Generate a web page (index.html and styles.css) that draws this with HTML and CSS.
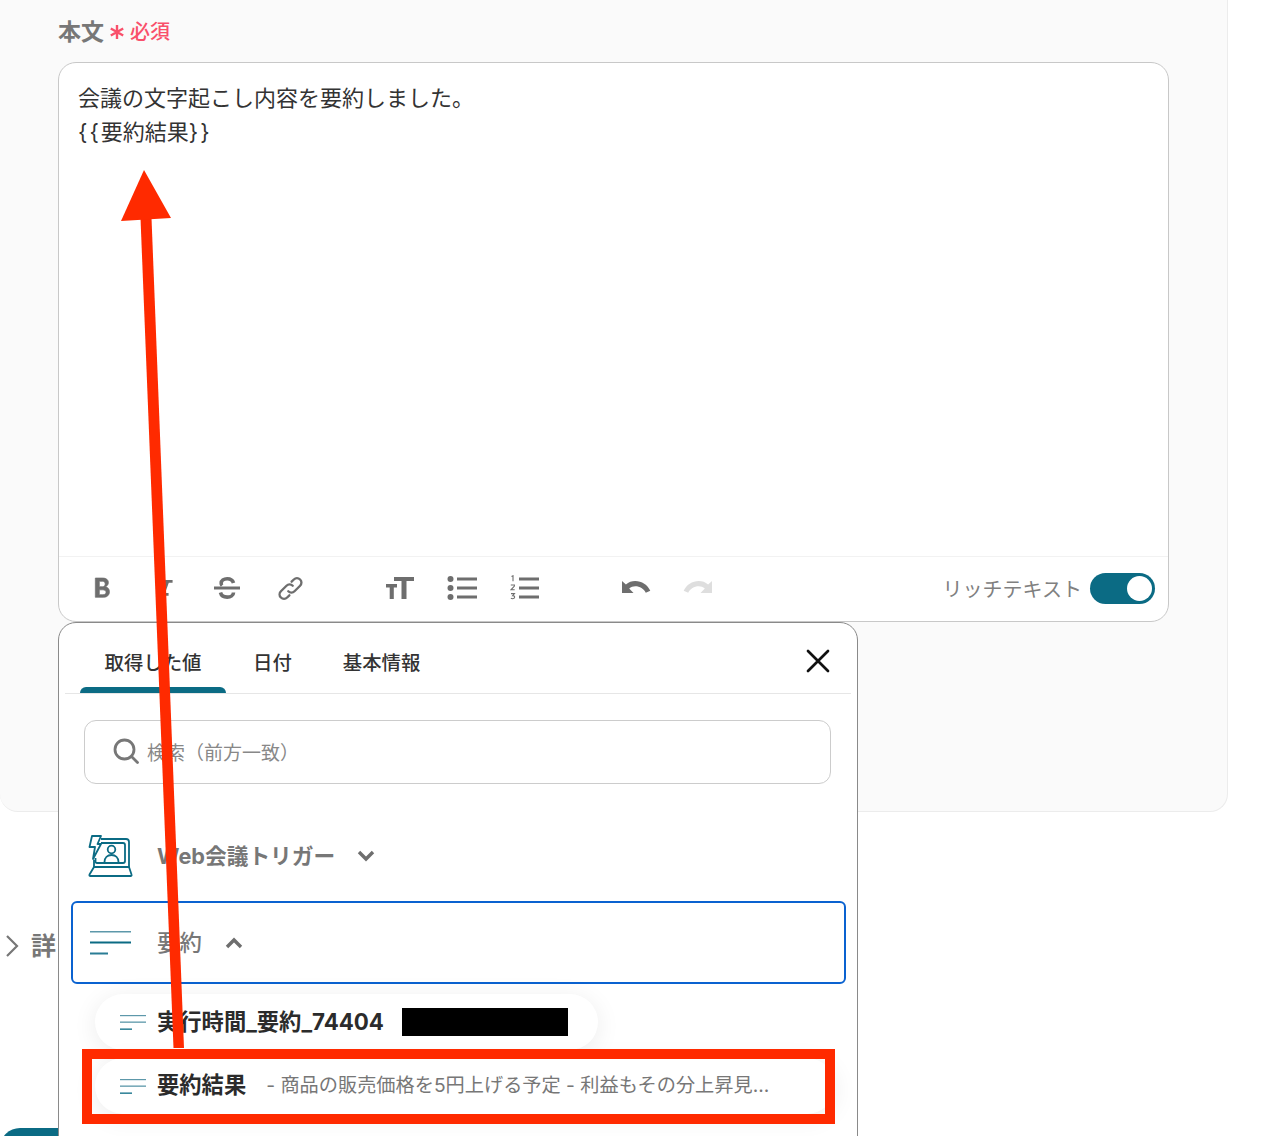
FILE: index.html
```html
<!DOCTYPE html>
<html lang="ja">
<head>
<meta charset="utf-8">
<title>本文</title>
<link rel="stylesheet" href="styles.css">
</head>
<body>
<div class="page">
  <section class="panel">
    <div class="label-row">
      <span class="label">本文</span>
      <svg class="req-star" viewBox="0 0 16 16" width="16" height="16"><path d="M8 1v14M1.800 4.500l12.400 7M14.200 4.500l-12.400 7" stroke="#f9506b" stroke-width="2.400" fill="none"/></svg>
      <span class="req">必須</span>
    </div>
    <div class="editor">
      <div class="editor-body">
        <p>会議の文字起こし内容を要約しました。</p>
        <p><span class="brace">{{</span>要約結果<span class="brace">}}</span></p>
      </div>
      <div class="toolbar">
        <div class="tool"><svg viewBox="0 0 24 24" width="32" height="32"><path d="M7 4.500h5.600c2.600 0 4.200 1.400 4.200 3.400 0 1.600-1 2.800-2.400 3.200 1.900.3 3.200 1.700 3.200 3.700 0 2.500-1.800 4.200-4.600 4.200H7zM10 7v4h2.300c1.300 0 2.100-.8 2.100-2s-.8-2-2.100-2zm0 6.400V17h2.700c1.500 0 2.300-.7 2.300-1.800s-.9-1.800-2.400-1.800z" fill="#6e6e6e" stroke="#6e6e6e" stroke-width="0.500" fill-rule="evenodd"/></svg></div>
        <div class="tool"><svg viewBox="0 0 24 24" width="26" height="26"><path d="M9 4.500h10v2.600h-3.500l-3.400 9.400h3.200v2.600H5v-2.600h3.900l3.400-9.400H9z" fill="#6e6e6e"/></svg></div>
        <div class="tool tool-strike"><svg viewBox="0 0 28 24" width="28" height="24"><path d="M1 10.500h26v3H1z" fill="#6e6e6e"/><path d="M20.500 7C19.700 4.200 17.200 2.800 14.200 2.800c-3.500 0-6 1.700-6 4.400 0 1 .3 1.800.9 2.400M7.500 16.500c.7 3 3.300 4.600 6.700 4.600 3.500 0 6.300-1.800 6.300-4.700" fill="none" stroke="#6e6e6e" stroke-width="3.600"/></svg></div>
        <div class="tool"><svg viewBox="0 0 26 26" width="29" height="29"><g fill="none" stroke="#6e6e6e" stroke-width="2.100" stroke-linecap="round"><path d="M11 15.500c1.700 1.700 4.100 1.500 5.600 0l5-5c1.600-1.600 1.600-4 0-5.600-1.600-1.600-4-1.600-5.600 0l-2 2"/><path d="M15 10.500c-1.700-1.700-4.100-1.500-5.600 0l-5 5c-1.600 1.600-1.600 4 0 5.600 1.600 1.600 4 1.600 5.600 0l2-2"/></g></svg></div>
        <div class="tool group-text"><svg viewBox="0 0 30 24" width="30" height="24"><path d="M9 1h20v4h-7.500v18h-5V5H9zM1 8h11v3.500H8.800V23H4.700V11.500H1z" fill="#6e6e6e"/></svg></div>
        <div class="tool tool-list"><svg viewBox="0 0 30 24" width="30" height="24"><g fill="#6e6e6e"><circle cx="3.500" cy="3" r="3"/><circle cx="3.500" cy="12" r="3"/><circle cx="3.500" cy="21" r="3"/><rect x="10" y="1.500" width="20" height="3"/><rect x="10" y="10.500" width="20" height="3"/><rect x="10" y="19.500" width="20" height="3"/></g></svg></div>
        <div class="tool"><svg viewBox="0 0 30 26" width="30" height="26"><g fill="#6e6e6e"><rect x="9" y="2.500" width="20" height="3"/><rect x="9" y="11.500" width="20" height="3"/><rect x="9" y="20.500" width="20" height="3"/></g><g fill="none" stroke="#6e6e6e" stroke-width="1.100"><path d="M1.500 1.500l1.500-.7v5.500M.8 10h3.600v1L1 14.800h3.700M1 18.600h3.400l-1.700 2c1.500 0 2 .7 2 1.500 0 1-.8 1.600-1.900 1.600-.8 0-1.500-.2-1.900-.6"/></g></svg></div>
        <div class="tool group-history"><svg viewBox="0 0 30 20" width="30" height="20"><path d="M0 3v12h11.500L7.200 10.500C9 8.900 11 8.200 13.300 8.200c4.500 0 8.500 2.600 10.500 6.500l4.500-1.900C25.700 6.900 19.800 3 13.200 3 9.800 3 6.600 4.200 3.900 6.400z" fill="#6e6e6e"/></svg></div>
        <div class="tool tool-redo"><svg viewBox="0 0 30 20" width="30" height="20"><path d="M30 3v12H18.500l4.300-4.500C21 8.900 19 8.200 16.700 8.200c-4.500 0-8.500 2.600-10.500 6.500L1.700 12.800C4.300 6.900 10.200 3 16.800 3c3.400 0 6.600 1.200 9.300 3.400z" fill="#dedede"/></svg></div>
        <div class="rich">
          <span class="rich-label">リッチテキスト</span>
          <span class="toggle"><span class="knob"></span></span>
        </div>
      </div>
    </div>
  </section>

  <div class="details">
    <svg viewBox="0 0 14 24" width="14" height="24"><path d="M2 2l10 10L2 22" fill="none" stroke="#777" stroke-width="2.200"/></svg>
    <span>詳</span>
  </div>
  <div class="teal-btn"></div>

  <aside class="popup">
    <div class="tabs">
      <div class="tab tab-active">取得した値</div>
      <div class="tab tab-date">日付</div>
      <div class="tab tab-basic">基本情報</div>
      <svg class="close" viewBox="0 0 24 24" width="24" height="24"><path d="M2 2l20 20M22 2L2 22" stroke="#111" stroke-width="2.700" stroke-linecap="round"/></svg>
    </div>
    <div class="search">
      <svg viewBox="0 0 26 26" width="26" height="26"><circle cx="11.500" cy="11.500" r="9.500" fill="none" stroke="#777" stroke-width="2.800"/><path d="M18.500 18.500l6 6" stroke="#777" stroke-width="2.800" stroke-linecap="round"/></svg>
      <span>検索（前方一致）</span>
    </div>
    <div class="group group-trigger">
      <svg class="laptop" viewBox="0 0 46 42" width="46" height="42"><g fill="none" stroke="#0b6b84" stroke-width="1.800" stroke-linejoin="round"><path d="M13 4h25c2 0 3 1 3 3v25H6v-7"/><path d="M13 8h22c1.500 0 2 .5 2 2v16c0 1.500-.5 2-2 2H9c-1 0-1.500-.5-1.500-1.500V23"/><path d="M6 32L1.500 39.500c-.4 1 .1 1.500 1 1.500h40c1 0 1.500-.7 1-1.500L41 32z"/><circle cx="23.500" cy="14.500" r="3.800"/><path d="M16.500 27c0-4.500 3-7 7-7s7 2.500 7 7"/><path d="M4 1h9L9.500 9H13L5 24l2-12H1.500z" fill="#fff"/></g></svg>
      <span class="group-name">Web会議トリガー</span>
      <svg class="chev" viewBox="0 0 18 12" width="18" height="12"><path d="M2 2l7 7 7-7" fill="none" stroke="#6e6e6e" stroke-width="3.400"/></svg>
    </div>
    <div class="group group-summary">
      <svg class="lines" viewBox="0 0 41 24" width="41" height="24"><rect y="0" width="41" height="1.500" fill="#5d98aa"/><rect y="10.500" width="41" height="2" fill="#0b6b84"/><rect y="21.500" width="18" height="2" fill="#2a7d95"/></svg>
      <span class="group-name group-light">要約</span>
      <svg class="chev" viewBox="0 0 18 12" width="18" height="12"><path d="M2 10l7-7 7 7" fill="none" stroke="#6e6e6e" stroke-width="3.400"/></svg>
    </div>
    <div class="pill pill-first">
      <svg viewBox="0 0 26 15" width="26" height="15"><rect width="26" height="1.200" fill="#5d98aa"/><rect y="6.500" width="26" height="1.300" fill="#5d98aa"/><rect y="13.500" width="12" height="1.300" fill="#0b6b84"/></svg>
      <strong>実行時間_要約_74404</strong>
      <span class="redact"></span>
    </div>
    <div class="pill pill-second">
      <svg viewBox="0 0 26 15" width="26" height="15"><rect width="26" height="1.200" fill="#5d98aa"/><rect y="6.500" width="26" height="1.300" fill="#5d98aa"/><rect y="13.500" width="12" height="1.300" fill="#0b6b84"/></svg>
      <strong class="strong-up">要約結果</strong>
      <span class="desc">- 商品の販売価格を5円上げる予定 - 利益もその分上昇見...</span>
    </div>
  </aside>

  <div class="highlight"></div>
  <svg class="arrow" viewBox="0 0 1288 1136" width="1288" height="1136"><path d="M140.500 218L173.500 1048H184L151.500 218z" fill="#ff2a00"/><path d="M144 170L121 221L171 218z" fill="#ff2a00"/></svg>
</div>
</body>
</html>
```

FILE: styles.css
```css
* { box-sizing: border-box; }
html, body { margin: 0; padding: 0; background: #fff; }
body {
  font-family: Inter, "Noto Sans CJK JP", "Noto Sans", sans-serif;
  color: #333;
}
.page {
  position: relative;
  width: 1288px;
  height: 1136px;
  overflow: hidden;
}
.panel {
  width: 1228px;
  height: 812px;
  background: #fafafa;
  border: 1px solid #ececec;
  border-top: 0;
  border-left: 0;
  border-radius: 0 0 18px 18px;
  padding: 17px 0 0 58px;
}
.label-row {
  display: flex;
  align-items: center;
  height: 30px;
  margin-bottom: 15px;
}
.label { font-size: 23px; font-weight: 700; color: #777; line-height: 30px; }
.req-star { margin-left: 5px; }
.req { font-size: 20px; font-weight: 500; color: #f9506b; margin-left: 5px; line-height: 30px; }
.editor {
  width: 1111px;
  height: 560px;
  background: #fff;
  border: 1px solid #c8c8c8;
  border-radius: 18px;
  display: flex;
  flex-direction: column;
}
.editor-body {
  flex: 1;
  padding: 18px 19px 0;
  font-size: 22px;
  line-height: 34px;
  color: #333;
}
.editor-body p { margin: 0; }
.brace { letter-spacing: 2px; }
.toolbar {
  height: 65px;
  border-top: 1px solid #f2f2f2;
  display: flex;
  align-items: center;
  padding: 0 13px 2px 11px;
}
.tool {
  width: 63px;
  display: flex;
  justify-content: center;
  align-items: center;
}
.tool-strike svg { margin-left: -2px; }
.group-text { margin-left: 46px; }
.tool-list { margin-left: -1px; }
.group-history { margin-left: 49px; }
.tool-redo { margin-left: -3px; }
.rich { margin-left: auto; display: flex; align-items: center; gap: 8px; }
.rich-label { font-size: 20px; color: #808080; font-weight: 400; }
.toggle {
  width: 65px;
  height: 31px;
  border-radius: 16px;
  background: #0b6b84;
  display: flex;
  justify-content: flex-end;
  align-items: center;
  padding-right: 3px;
}
.knob { width: 25px; height: 25px; border-radius: 50%; background: #fff; }
.details {
  display: flex;
  align-items: center;
  gap: 12px;
  height: 36px;
  margin-top: 114px;
  padding-left: 5px;
  font-size: 25px;
  font-weight: 700;
  color: #777;
}
.details svg { margin-top: 4px; }
.teal-btn {
  width: 80px;
  height: 40px;
  margin-top: 166px;
  border-radius: 20px 20px 0 0;
  background: #0b6b84;
}
.popup {
  position: absolute;
  left: 58px;
  top: 622px;
  width: 800px;
  height: 530px;
  background: #fff;
  border: 1px solid #8a8a8a;
  border-radius: 18px 18px 0 0;
  padding: 0 6px;
}
.tabs {
  position: relative;
  display: flex;
  height: 71px;
  border-bottom: 1px solid #e6e6e6;
  font-size: 19.400px;
  font-weight: 500;
  color: #333;
  line-height: 27px;
}
.tab { padding-top: 27px; }
.tab-active {
  position: relative;
  width: 146px;
  margin-left: 15px;
  text-align: center;
}
.tab-active::after {
  content: "";
  position: absolute;
  left: 0;
  right: 0;
  bottom: 0;
  height: 6px;
  background: #0b6b84;
  border-radius: 6px 6px 0 0;
}
.tab-date { margin-left: 27px; }
.tab-basic { margin-left: 51px; }
.close { position: absolute; right: 21px; top: 26px; }
.search {
  display: flex;
  align-items: center;
  gap: 8px;
  width: 747px;
  height: 64px;
  margin: 26px 0 0 19px;
  padding: 0 0 2px 28px;
  border: 1px solid #ccc;
  border-radius: 12px;
  font-size: 19px;
  color: #888;
}
.group { display: flex; align-items: center; }
.group-trigger { height: 86px; margin-top: 31px; padding: 0 0 4px 23px; }
.group-summary {
  width: 775px;
  height: 83px;
  margin: 0 0 0 6px;
  border: 2.500px solid #0a62d0;
  border-radius: 6px;
  padding-left: 17px;
}
.group-name { font-size: 21.700px; font-weight: 700; color: #777; margin-top: -4px; }
.group-light { font-size: 22.400px; font-weight: 500; }
.laptop { margin-right: 23px; }
.lines { margin-right: 26px; }
.group-trigger .chev { margin-left: 22px; }
.group-summary .chev { margin-left: 23px; }
.pill {
  display: flex;
  align-items: center;
  height: 56px;
  margin-left: 30px;
  padding-left: 25px;
  border-radius: 28px;
  background: #fff;
  box-shadow: 0 4px 24px rgba(0, 0, 0, 0.08);
}
.pill strong { font-size: 22.300px; font-weight: 700; color: #2b2b2b; margin: -5px 0 0 11px; }
.pill .strong-up { margin-top: -7px; }
.pill-first { width: 503px; margin-top: 10px; }
.pill-second { width: 740px; margin-top: 8px; }
.redact { width: 166px; height: 28px; background: #000; margin: 0 0 0 18px; }
.desc { font-size: 19.200px; color: #777; margin: -4px 0 0 20px; white-space: nowrap; }
.highlight {
  position: absolute;
  left: 82px;
  top: 1049px;
  width: 753px;
  height: 75px;
  border: 10px solid #ff2a00;
}
.arrow { position: absolute; left: 0; top: 0; pointer-events: none; }
```
